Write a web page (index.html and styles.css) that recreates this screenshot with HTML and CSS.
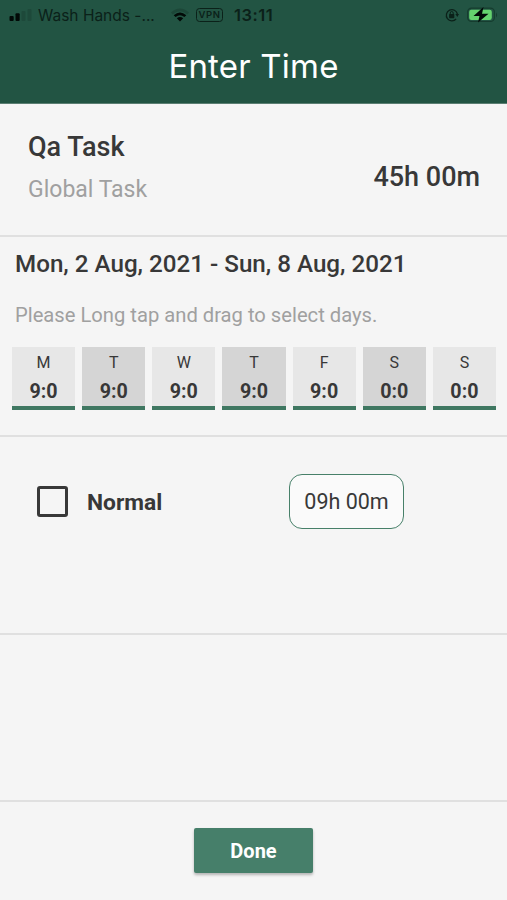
FILE: index.html
```html
<!DOCTYPE html>
<html lang="en">
<head>
<meta charset="utf-8">
<meta name="viewport" content="width=device-width, initial-scale=1">
<title>Enter Time</title>
<link rel="stylesheet" href="styles.css">
</head>
<body>
<header class="header">
  <div class="status">
    <svg class="signal" width="23" height="12" viewBox="0 0 23 12"><g fill="#020a07"><rect x="0.5" y="7" width="4.2" height="5" rx="1"/><rect x="6.5" y="4.3" width="4.2" height="7.7" rx="1"/></g><g opacity=".2"><rect x="12.5" y="2" width="4" height="10" rx="1"/><rect x="18.5" y="0" width="4" height="12" rx="1"/></g></svg>
    <span class="carrier">Wash Hands -...</span>
    <svg class="wifi" width="18" height="14" viewBox="0 0 18 14"><path opacity=".25" d="M0 4.6Q9-3.4 18 4.6L16.2 6.4Q9 .2 1.8 6.4Z"/><path fill="#020a07" d="M2.7 7.2Q9 1.8 15.3 7.2L13.4 9.1Q9 5.6 4.6 9.1ZM5.8 10.2Q9 7.8 12.2 10.2L9 13.4Z"/></svg>
    <span class="vpn">VPN</span>
    <span class="clock">13:11</span>
    <svg class="lock" width="14" height="14" viewBox="0 0 14 14"><path d="M11.1 11A5.6 5.6 0 1 1 12.4 6" fill="none" stroke="#0b2119" stroke-width="1.3"/><path d="M10.4 6h3.6l-1.7 2.9Z"/><rect x="4.1" y="6" width="5.2" height="4.2" rx=".7"/><path d="M5.2 6.5V5a1.5 1.5 0 0 1 3 0v1.5" fill="none" stroke="#0b2119"/></svg>
    <svg class="battery" width="31" height="16" viewBox="0 0 31 16"><rect x=".6" y="1.1" width="26.8" height="13.4" rx="4" fill="none" stroke="#163d2f" stroke-width="1.2"/><rect x="2.2" y="2.7" width="22.6" height="10.2" rx="2.2" fill="#65d36e"/><path d="M29 5.4q2.2 2.5 0 5Z" fill="#163d2f"/><path d="M16.5 0 6.5 9h6L11 15.5 21.5 6.8H15Z" fill="#020a07"/></svg>
  </div>
  <h1 class="title">Enter Time</h1>
</header>
<main>
  <section class="task">
    <div>
      <h2 class="task-name">Qa Task</h2>
      <p class="task-kind">Global Task</p>
    </div>
    <div class="total">45h 00m</div>
  </section>
  <section class="week">
    <h2 class="range">Mon, 2 Aug, 2021 - Sun, 8 Aug, 2021</h2>
    <p class="hint">Please Long tap and drag to select days.</p>
    <div class="days">
      <div class="day"><span>M</span><b>9:0</b></div>
      <div class="day alt"><span>T</span><b>9:0</b></div>
      <div class="day"><span>W</span><b>9:0</b></div>
      <div class="day alt"><span>T</span><b>9:0</b></div>
      <div class="day"><span>F</span><b>9:0</b></div>
      <div class="day alt"><span>S</span><b>0:0</b></div>
      <div class="day"><span>S</span><b>0:0</b></div>
    </div>
  </section>
  <section class="entry">
    <span class="check"></span>
    <span class="label">Normal</span>
    <span class="time">09h 00m</span>
  </section>
  <section class="empty"></section>
</main>
<footer class="footer"><button class="done">Done</button></footer>
</body>
</html>
```
FILE: styles.css
```css
* { box-sizing: border-box; }
body { margin: 0; height: 900px; overflow: hidden; display: flex; flex-direction: column; background: #f5f5f5; color: #383838; font-family: Roboto, sans-serif; }
h1, h2, p { margin: 0; }
svg { display: block; flex: none; }
.header { height: 104px; flex: none; background: #225443; border-bottom: 1px solid #5b7e72; }
.status { height: 30px; display: flex; align-items: center; padding: 0 9px; font-family: Inter, sans-serif; color: #0b2119; fill: #0b2119; white-space: nowrap; }
.carrier { width: 118px; margin-left: 6px; font-size: 15.5px; }
.wifi { margin-left: 15px; }
.vpn { width: 27px; height: 14px; margin-left: 7px; border: 1.3px solid #0b2119; border-radius: 3.5px; font-size: 9.5px; font-weight: 600; line-height: 12px; text-align: center; letter-spacing: 0.6px; }
.clock { margin-left: 11px; font-size: 16.5px; font-weight: 600; letter-spacing: 0.5px; }
.lock { margin-left: auto; }
.battery { margin-left: 8px; }
.title { padding-top: 15px; text-align: center; font: 400 33px/42px Inter, sans-serif; letter-spacing: 0.2px; color: #fff; }
.task { height: 133px; display: flex; justify-content: space-between; align-items: flex-start; padding: 27px 27px 0 28px; border-bottom: 2px solid #e0e0e0; }
.task-name { font-size: 27px; line-height: 32px; font-weight: 500; }
.task-kind { margin-top: 12px; font-size: 23px; line-height: 30px; color: #a0a0a0; }
.total { padding-top: 30px; font-size: 27px; font-weight: 500; line-height: 32px; }
.week { height: 200px; padding: 11px 11px 0 12px; border-bottom: 2px solid #e0e0e0; }
.range { padding-left: 3px; font-size: 24.2px; line-height: 32px; font-weight: 500; white-space: nowrap; }
.hint { padding: 21px 0 0 3px; font-size: 20.2px; line-height: 28px; color: #a0a0a0; white-space: nowrap; }
.days { display: grid; grid-template-columns: repeat(7, 1fr); gap: 7px; margin-top: 18px; }
.day { height: 63px; padding-top: 6px; display: flex; flex-direction: column; align-items: center; background: #e7e7e7; border-bottom: 4px solid #3f7761; font-size: 16px; line-height: 20px; }
.day b { margin-top: 7px; font-size: 19.7px; line-height: 24px; font-weight: 700; }
.alt { background: #d5d5d5; }
.entry { height: 198px; display: flex; align-items: flex-start; padding: 37px 0 0 37px; border-bottom: 2px solid #e0e0e0; }
.check { width: 31px; height: 31px; margin-top: 12px; border: 3px solid #383838; border-radius: 3px; }
.label { width: 202px; margin: 13px 0 0 19px; font-size: 22.8px; line-height: 31px; font-weight: 700; }
.time { width: 115px; height: 55px; border: 1.5px solid #478069; border-radius: 13px; background: #fafafa; font-size: 21.5px; line-height: 54px; text-align: center; white-space: nowrap; }
.empty { height: 167px; border-bottom: 2px solid #e0e0e0; }
.footer { padding-top: 26px; display: flex; justify-content: center; }
.done { width: 119px; height: 45px; padding: 0; border: 0; border-radius: 2px; background: #467f6a; color: #fff; font: 700 20px/46px Roboto, sans-serif; box-shadow: 0 2px 3px #0004; }
```
